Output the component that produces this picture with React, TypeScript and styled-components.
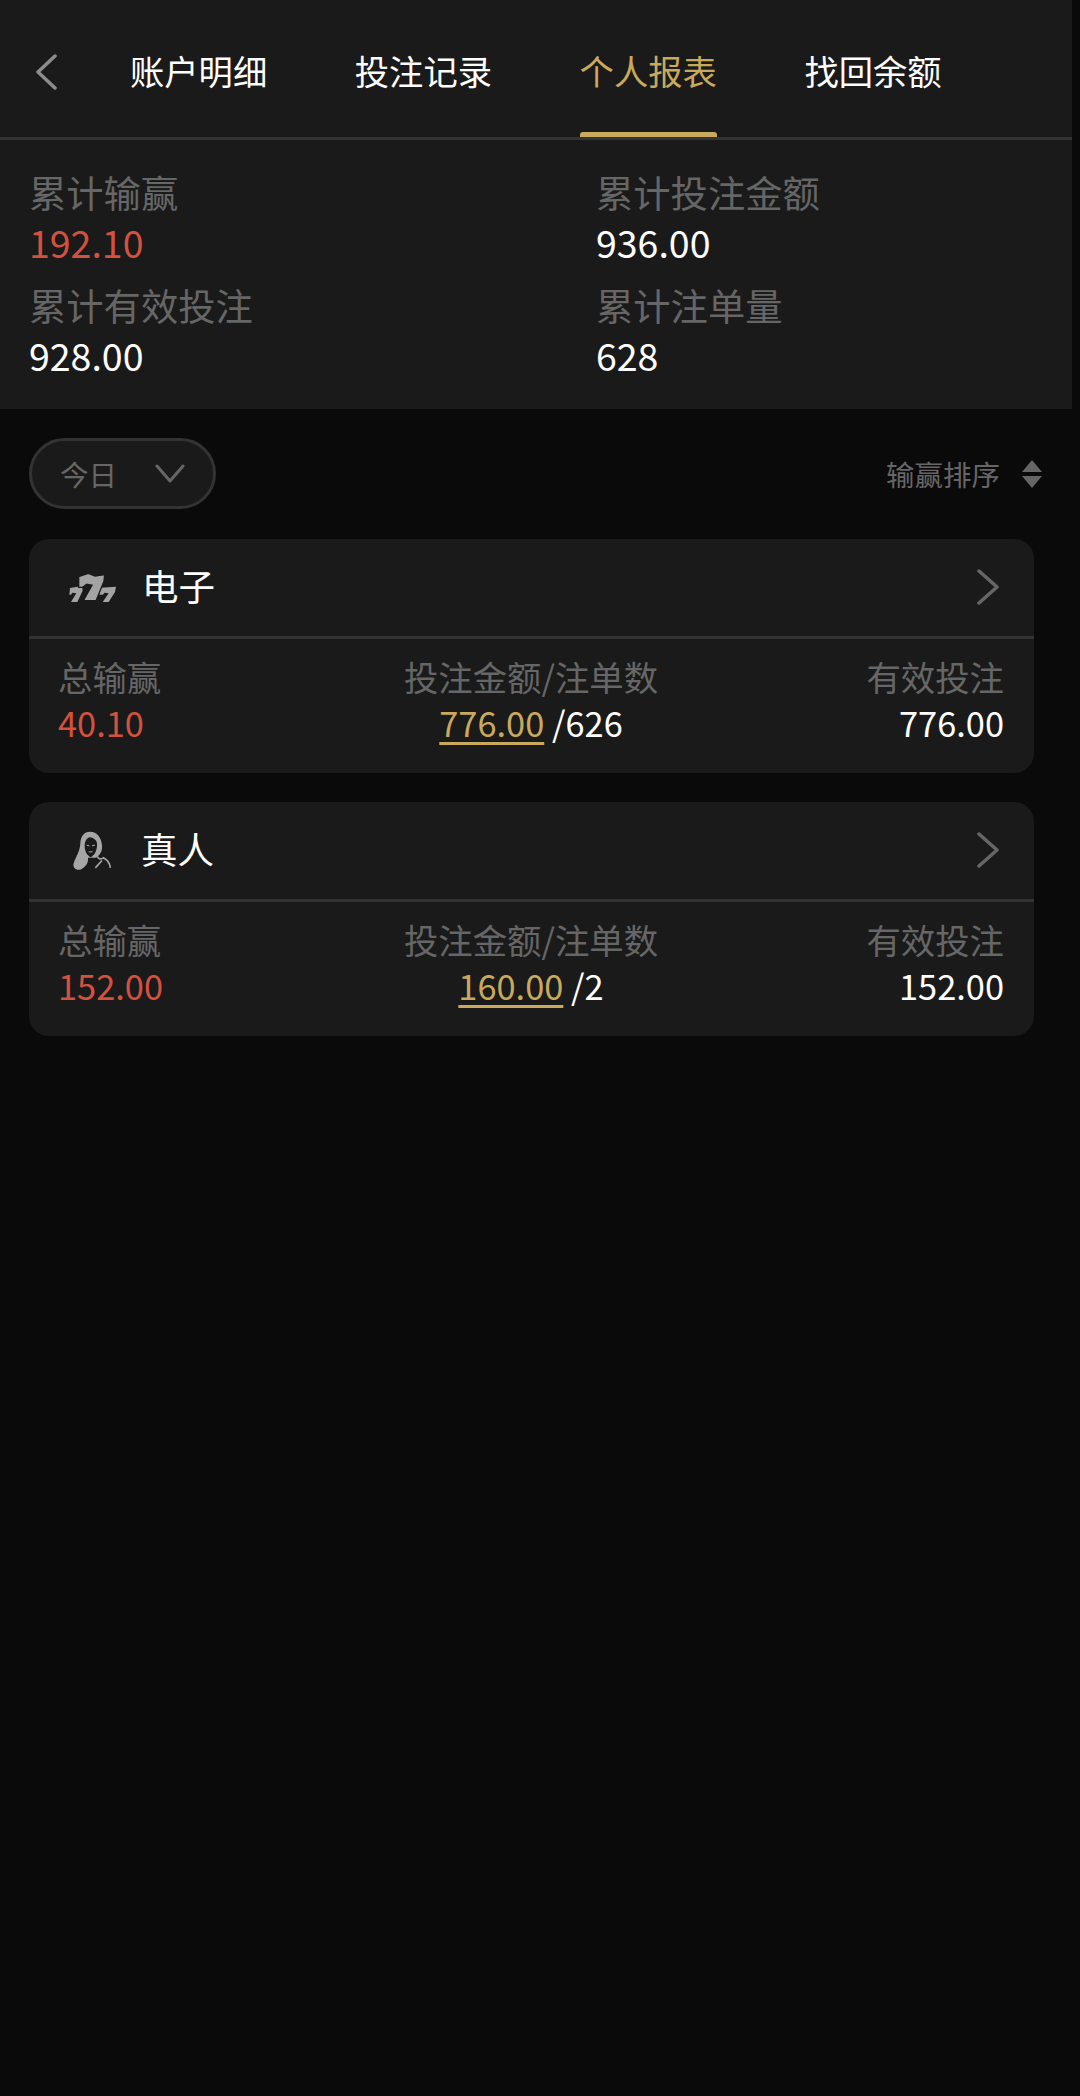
import React from "react";
import styled, { createGlobalStyle } from "styled-components";

const GlobalStyle = createGlobalStyle`
  html, body {
    margin: 0;
    padding: 0;
    background: #0a0a0a;
  }
  body {
    min-height: 2096px;
    font-family: "Noto Sans CJK SC", "Noto Sans", sans-serif;
  }
`;

const Page = styled.div`
  width: 1080px;
  min-height: 2096px;
  background: #0a0a0a;
`;

const TopPanel = styled.section`
  width: 1072px;
  background: #1a1a1a;
`;

const TabBar = styled.nav`
  display: flex;
  align-items: center;
  height: 137px;
  padding-left: 35px;
  border-bottom: 3px solid #333;
`;

const BackIcon = styled.svg`
  width: 23px;
  height: 36px;
  margin-top: 6px;
  margin-right: 72px;
  fill: none;
  stroke: #8c8c8c;
  stroke-width: 3.5;
  stroke-linecap: round;
  stroke-linejoin: round;
`;

const Tabs = styled.div`
  display: flex;
  gap: 87.6px;
  height: 100%;
`;

const Tab = styled.div<{ $active?: boolean }>`
  position: relative;
  display: flex;
  align-items: center;
  padding-top: 2px;
  box-sizing: border-box;
  font-size: 34.3px;
  color: ${(p) => (p.$active ? "#c9a95c" : "#fff")};

  ${(p) =>
    p.$active &&
    `&::after {
      content: "";
      position: absolute;
      left: 0;
      right: 0;
      bottom: 0;
      height: 5px;
      border-radius: 3px 3px 0 0;
      background: #c9a95c;
    }`}
`;

const Summary = styled.div`
  display: grid;
  grid-template-columns: 567px 1fr;
  row-gap: 13px;
  padding: 27px 30px 29px 29px;
`;

const SummaryCell = styled.div`
  display: flex;
  flex-direction: column;
`;

const SummaryLabel = styled.span`
  font-size: 37.3px;
  line-height: 50px;
  color: #666;
`;

const SummaryValue = styled.span<{ $red?: boolean }>`
  font-size: 37.5px;
  line-height: 50px;
  color: ${(p) => (p.$red ? "#d4513f" : "#fff")};
`;

const FilterRow = styled.div`
  display: flex;
  align-items: center;
  justify-content: space-between;
  padding: 29px 38px 30px 29px;
`;

const RangePill = styled.div`
  display: flex;
  align-items: center;
  gap: 38px;
  box-sizing: border-box;
  width: 187px;
  height: 71px;
  padding-left: 28px;
  border: 3px solid #333;
  border-radius: 36px;
  background: #1a1a1a;
  font-size: 28.5px;
  color: #666;
`;

const PillChevron = styled.svg`
  width: 30px;
  height: 19px;
  fill: none;
  stroke: #666;
  stroke-width: 3;
  stroke-linecap: round;
  stroke-linejoin: round;
`;

const SortButton = styled.div`
  display: flex;
  align-items: center;
  gap: 22px;
  font-size: 28.5px;
  color: #666;
`;

const SortCaret = styled.svg`
  width: 20px;
  height: 28px;
  fill: #666;
`;

const CardList = styled.div`
  display: flex;
  flex-direction: column;
  gap: 29px;
  width: 1005px;
  margin-left: 29px;
`;

const Card = styled.article`
  border-radius: 20px;
  background: #1a1a1a;
`;

const CardHeader = styled.header`
  display: flex;
  align-items: center;
  height: 97px;
  padding: 0 34px 0 39px;
  border-bottom: 3px solid #333;
`;

const CardIcon = styled.svg<{ $gap: number }>`
  width: 50px;
  margin-right: ${(p) => p.$gap}px;
`;

const CardTitle = styled.span`
  flex: 1;
  margin-bottom: 4px;
  font-size: 36.5px;
  color: #fff;
`;

const CardArrow = styled.svg`
  width: 24px;
  height: 36px;
  margin-bottom: 2px;
  fill: none;
  stroke: #666;
  stroke-width: 3.5;
  stroke-linecap: round;
  stroke-linejoin: round;
`;

const CardStats = styled.div`
  display: grid;
  grid-template-columns: 1fr auto 1fr;
  padding: 14px 30px 27px 29px;
`;

const StatColumn = styled.div<{ $align: "left" | "center" | "right" }>`
  display: flex;
  flex-direction: column;
  text-align: ${(p) => p.$align};
`;

const StatLabel = styled.span`
  font-size: 34.4px;
  line-height: 46px;
  color: #666;
`;

const StatValue = styled.span<{ $red?: boolean }>`
  font-size: 34.4px;
  line-height: 47px;
  color: ${(p) => (p.$red ? "#d4513f" : "#fff")};
`;

const BetAmount = styled.span`
  color: #c9a95c;
  text-decoration: underline;
  text-decoration-thickness: 3px;
  text-underline-offset: 5px;
`;

const SevensIcon = () => (
  <CardIcon $gap={24} viewBox="84 66 150 96" height="32">
    <g fill="#a3a3a3">
      <path d="M90 114 L126 108 L128 122 L112 156 L93 156 L109 130 L97 128 L93 134 L88 134 Z" />
      <path d="M180 113 L228 110 L225 126 L206 156 L188 156 L206 130 L194 128 L188 134 L178 134 Z" />
      <path
        stroke="#1a1a1a"
        strokeWidth="4"
        d="M116 80 L145 70 L165 78 L194 74 L192 94 L168 152 L130 152 L156 106 L140 103 L128 112 L116 112 Z"
      />
    </g>
  </CardIcon>
);

const DealerIcon = () => (
  <CardIcon $gap={23} viewBox="84 45 150 125" height="42">
    <path
      fill="#a6a6a6"
      d="M150 50 C132 50 122 64 121 84 C120 108 108 124 101 144 C97 158 110 168 124 162 C136 156 146 144 144 128 L168 128 C178 120 188 110 186 90 C184 68 172 50 150 50 Z"
    />
    <path
      fill="#1a1a1a"
      d="M150 66 C140 68 134 78 134 92 C134 110 142 122 152 126 C162 122 170 110 171 92 C172 82 170 70 150 66 Z"
    />
    <path
      fill="none"
      stroke="#a6a6a6"
      strokeWidth="3"
      d="M140 90 L148 92 M156 92 L165 90 M146 110 L158 110"
    />
    <path
      fill="none"
      stroke="#a6a6a6"
      strokeWidth="5"
      d="M172 124 C176 132 182 134 190 128 C202 134 210 146 211 158 M166 158 L186 136"
    />
  </CardIcon>
);

type Report = {
  title: string;
  icon: React.ReactNode;
  profit: string;
  amount: string;
  orders: string;
  valid: string;
};

const reports: Report[] = [
  { title: "电子", icon: <SevensIcon />, profit: "40.10", amount: "776.00", orders: "/626", valid: "776.00" },
  { title: "真人", icon: <DealerIcon />, profit: "152.00", amount: "160.00", orders: "/2", valid: "152.00" },
];

const tabs = ["账户明细", "投注记录", "个人报表", "找回余额"];

const App = () => {
  return (
    <Page>
      <GlobalStyle />
      <TopPanel>
        <TabBar>
          <BackIcon viewBox="0 0 23 36">
            <path d="M20 2 L3 18 L20 34" />
          </BackIcon>
          <Tabs>
            {tabs.map((tab) => (
              <Tab key={tab} $active={tab === "个人报表"}>
                {tab}
              </Tab>
            ))}
          </Tabs>
        </TabBar>
        <Summary>
          <SummaryCell>
            <SummaryLabel>累计输赢</SummaryLabel>
            <SummaryValue $red>192.10</SummaryValue>
          </SummaryCell>
          <SummaryCell>
            <SummaryLabel>累计投注金额</SummaryLabel>
            <SummaryValue>936.00</SummaryValue>
          </SummaryCell>
          <SummaryCell>
            <SummaryLabel>累计有效投注</SummaryLabel>
            <SummaryValue>928.00</SummaryValue>
          </SummaryCell>
          <SummaryCell>
            <SummaryLabel>累计注单量</SummaryLabel>
            <SummaryValue>628</SummaryValue>
          </SummaryCell>
        </Summary>
      </TopPanel>

      <FilterRow>
        <RangePill>
          今日
          <PillChevron viewBox="0 0 30 19">
            <path d="M2 2 L15 17 L28 2" />
          </PillChevron>
        </RangePill>
        <SortButton>
          输赢排序
          <SortCaret viewBox="0 0 20 28">
            <path d="M10 0 L20 12 L0 12 Z M0 16 L20 16 L10 28 Z" />
          </SortCaret>
        </SortButton>
      </FilterRow>

      <CardList>
        {reports.map((report) => (
          <Card key={report.title}>
            <CardHeader>
              {report.icon}
              <CardTitle>{report.title}</CardTitle>
              <CardArrow viewBox="0 0 24 36">
                <path d="M3 2 L21 18 L3 34" />
              </CardArrow>
            </CardHeader>
            <CardStats>
              <StatColumn $align="left">
                <StatLabel>总输赢</StatLabel>
                <StatValue $red>{report.profit}</StatValue>
              </StatColumn>
              <StatColumn $align="center">
                <StatLabel>投注金额/注单数</StatLabel>
                <StatValue>
                  <BetAmount>{report.amount}</BetAmount> {report.orders}
                </StatValue>
              </StatColumn>
              <StatColumn $align="right">
                <StatLabel>有效投注</StatLabel>
                <StatValue>{report.valid}</StatValue>
              </StatColumn>
            </CardStats>
          </Card>
        ))}
      </CardList>
    </Page>
  );
};

export default App;
